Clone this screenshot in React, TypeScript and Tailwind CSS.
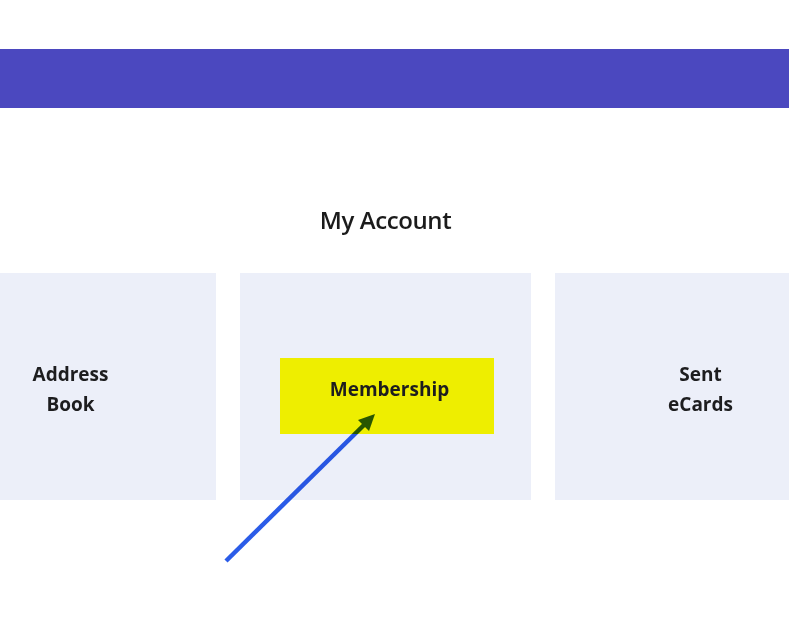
import React from "react";

function Card({ lines, highlight = false }: { lines: string[]; highlight?: boolean }) {
  return (
    <div className="relative flex h-[227px] w-[291px] shrink-0 items-center justify-center bg-[#eceff9] pt-[4px]">
      {highlight && <div className="absolute left-[40px] top-[85px] h-[76px] w-[214px] bg-[#eeee00]" />}
      <div className={`relative text-center text-[19px] font-bold leading-[30px] text-[#1d1d1f] ${highlight ? "ml-[8px]" : ""}`}>
        {lines.map((l) => (
          <div key={l}>{l}</div>
        ))}
      </div>
    </div>
  );
}

export default function App() {
  return (
    <div className="relative h-[619px] w-[789px] overflow-hidden bg-white font-['Open_Sans',sans-serif]">
      <div className="mt-[49px] h-[59px] bg-[#4b48bf]" />

      <main className="w-[771px]">
        <h1 className="mt-[96px] text-center text-[24px] font-semibold leading-[32px] tracking-[-0.4px] text-[#1b1b1b]">My Account</h1>

        <div className="mt-[37px] flex justify-center gap-6">
          <Card lines={["Address", "Book"]} />
          <Card lines={["Membership"]} highlight />
          <Card lines={["Sent", "eCards"]} />
        </div>
      </main>

      {/* annotation arrow */}
      <svg className="pointer-events-none absolute inset-0 mix-blend-multiply" width="789" height="619" viewBox="0 0 789 619">
        <line x1="226" y1="561" x2="366" y2="423" stroke="#2b5ce8" strokeWidth="4.5" />
        <polygon points="375,414 358,420 369,431" fill="#2b5ce8" />
      </svg>
    </div>
  );
}
